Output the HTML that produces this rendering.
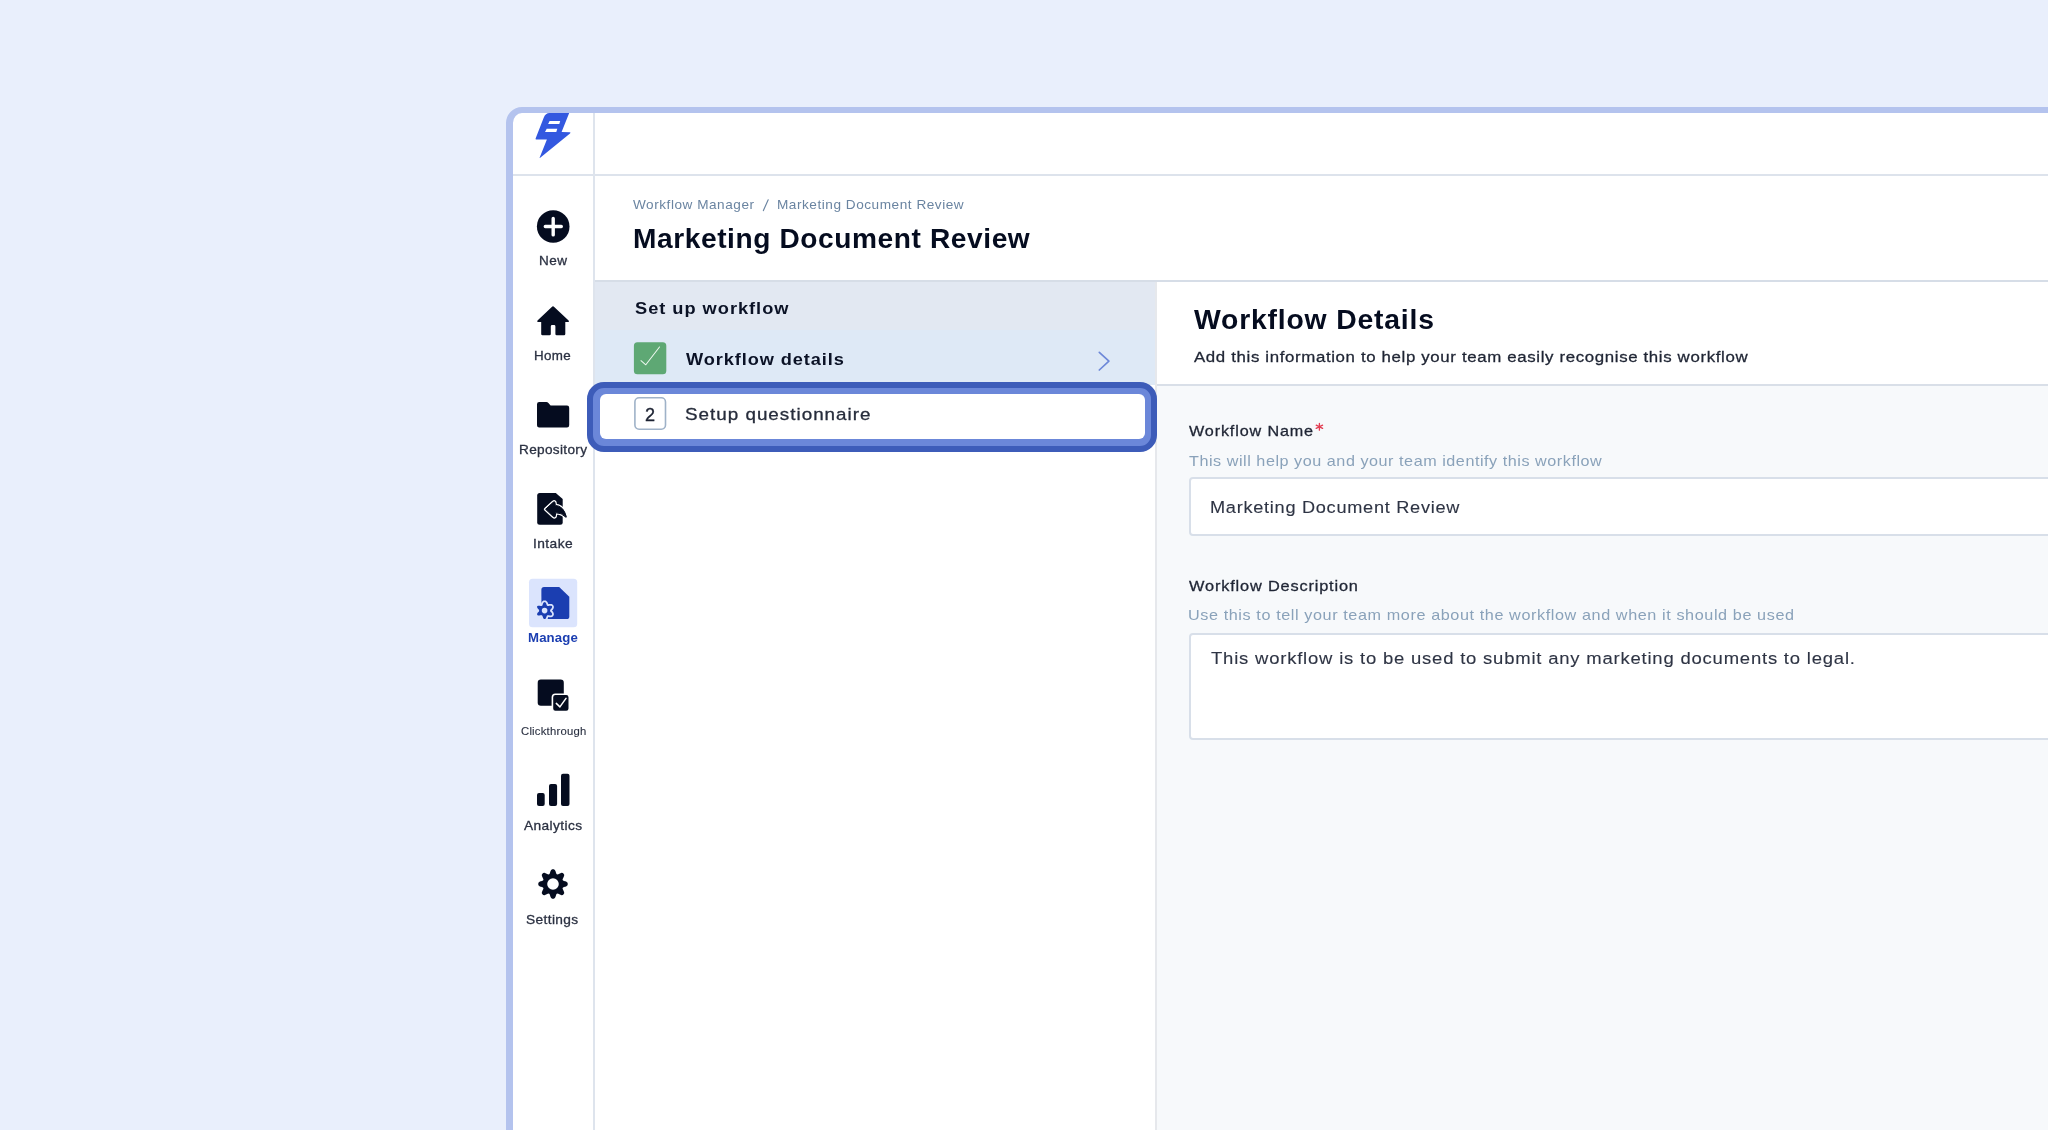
<!DOCTYPE html>
<html><head><meta charset="utf-8">
<style>
html,body{margin:0;padding:0;}
body{width:2048px;height:1130px;overflow:hidden;background:#e9effc;position:relative;font-family:"Liberation Sans",sans-serif;}
.a{position:absolute;}
.t{position:absolute;line-height:1;white-space:nowrap;will-change:transform;}
</style></head><body>
<!-- frame -->
<div class="a" style="left:506px;top:107px;width:1600px;height:1100px;border:6px solid #b4c3ee;border-left-width:7px;border-radius:16px;background:#fff;"></div>
<!-- top bar line -->
<div class="a" style="left:513px;top:174px;width:1535px;height:2px;background:#dde3ec;"></div>
<!-- sidebar divider -->
<div class="a" style="left:593px;top:113px;width:2px;height:1017px;background:#dee4ed;"></div>
<!-- page header line -->
<div class="a" style="left:595px;top:280px;width:1453px;height:2px;background:#d6dde7;"></div>
<!-- left panel bgs -->
<div class="a" style="left:595px;top:282px;width:560px;height:48px;background:#e2e8f2;"></div>
<div class="a" style="left:595px;top:330px;width:560px;height:55px;background:#dee9f6;"></div>
<!-- left panel right border -->
<div class="a" style="left:1155px;top:282px;width:2px;height:848px;background:#e6e8ec;"></div>
<!-- right header line -->
<div class="a" style="left:1157px;top:384px;width:891px;height:2px;background:#d9dfe8;"></div>
<!-- right body bg -->
<div class="a" style="left:1157px;top:386px;width:891px;height:744px;background:#f7f9fb;"></div>
<!-- inputs -->
<div class="a" style="left:1188.5px;top:476.5px;width:900px;height:55px;border:2px solid #d8dfe9;border-radius:4px;background:#fff;"></div>
<div class="a" style="left:1188.5px;top:632.5px;width:900px;height:103px;border:2px solid #d8dfe9;border-radius:4px;background:#fff;"></div>
<!-- highlight -->
<div class="a" style="left:587px;top:382px;width:558px;height:58px;border:6px solid #3d5cb9;border-radius:17px;background:#6b87d9;"></div>
<div class="a" style="left:600px;top:394px;width:544.6px;height:45px;border-radius:6px;background:#fff;"></div>
<!-- icons -->
<svg class="a" style="left:0;top:0" width="2048" height="1130" viewBox="0 0 2048 1130">
 <!-- logo -->
 <path d="M549.5,113 L569.2,113 L561.6,132 L570,132.3 Q571,132.6 570,133.6 L540.2,157.8 Q539.4,158.3 539.7,157.4 L546.9,139.4 L536.2,139.4 Q535.3,139.4 535.6,138.5 L543.8,117.5 Q545.5,113 549.5,113 Z" fill="#3358e0"/>
 <path d="M549.6,120.9 L560.2,120.9 L559.3,124.1 L548.1,124.1 Z M546.7,128.7 L557.3,128.7 L556.3,131.9 L545,131.9 Z" fill="#fff"/>
 <!-- new -->
 <circle cx="553.2" cy="226.5" r="16.3" fill="#050c1f"/>
 <path d="M545.3,226.5 H561.3 M553.2,218.4 V234.9" stroke="#fff" stroke-width="3.4" stroke-linecap="round"/>
 <!-- home -->
 <path d="M551.8,306.9 Q553,305.8 554.2,306.9 L568.6,320.6 Q569.6,321.9 568.3,321.9 L565.3,321.9 L565.3,334 Q565.3,335.3 564,335.3 L556.7,335.3 Q555.4,335.3 555.4,334 L555.4,326.4 Q555.4,325.1 554.1,325.1 L552.1,325.1 Q550.8,325.1 550.8,326.4 L550.8,334 Q550.8,335.3 549.5,335.3 L542.5,335.3 Q541.2,335.3 541.2,334 L541.2,321.9 L537.9,321.9 Q536.6,321.9 537.5,320.6 Z" fill="#050c1f"/>
 <!-- folder -->
 <path d="M539.2,402 L546.3,402 Q547.6,402 548.4,402.9 L550.6,405.6 L567,405.6 Q569.2,405.6 569.2,407.8 L569.2,425.3 Q569.2,427.5 567,427.5 L539.2,427.5 Q537,427.5 537,425.3 L537,404.2 Q537,402 539.2,402 Z" fill="#050c1f"/>
 <!-- intake -->
 <path d="M539.7,493 L555.8,493 L562.7,498.9 L562.7,522.3 Q562.7,524.8 560.2,524.8 L539.7,524.8 Q537.2,524.8 537.2,522.3 L537.2,495.5 Q537.2,493 539.7,493 Z" fill="#050c1f"/>
 <path d="M545.6,509.3 L553.2,502.3 Q554.8,501 555,502.8 L555.3,505.4 Q563.5,505.8 566.3,516.6 Q566.5,517.6 565.6,517 Q561.5,512.6 555.6,512.8 L555.3,515.9 Q555,517.8 553.4,516.5 Z" fill="none" stroke="#fff" stroke-width="3.4" stroke-linejoin="round"/>
 <path d="M545.6,509.3 L553.2,502.3 Q554.8,501 555,502.8 L555.3,505.4 Q563.5,505.8 566.3,516.6 Q566.5,517.6 565.6,517 Q561.5,512.6 555.6,512.8 L555.3,515.9 Q555,517.8 553.4,516.5 Z" fill="#050c1f" stroke="#050c1f" stroke-width="1" stroke-linejoin="round"/>
 <!-- manage -->
 <rect x="529" y="578.8" width="48.2" height="48.5" rx="3.5" fill="#dbe4fd"/>
 <path d="M544,587 L559.2,587 L569.3,596.8 L569.3,616.5 Q569.3,619.1 566.7,619.1 L544,619.1 Q541.4,619.1 541.4,616.5 L541.4,589.6 Q541.4,587 544,587 Z" fill="#1b3eb1"/>
 <path fill="#dbe4fd" stroke="#dbe4fd" stroke-width="3.4" stroke-linejoin="round" d="M550.10,610.60 L550.11,610.41 L550.19,610.21 L550.32,610.00 L550.50,609.77 L550.73,609.52 L550.98,609.24 L551.23,608.95 L551.49,608.63 L551.72,608.29 L551.91,607.94 L552.05,607.59 L552.13,607.25 L552.15,606.92 L552.09,606.62 L551.96,606.35 L551.79,606.10 L551.56,605.90 L551.27,605.75 L550.93,605.65 L550.56,605.60 L550.16,605.59 L549.75,605.62 L549.35,605.68 L548.96,605.76 L548.60,605.83 L548.27,605.90 L547.98,605.95 L547.73,605.96 L547.52,605.92 L547.35,605.84 L547.19,605.73 L547.06,605.56 L546.94,605.34 L546.83,605.07 L546.73,604.75 L546.61,604.40 L546.48,604.03 L546.33,603.65 L546.16,603.28 L545.95,602.94 L545.72,602.64 L545.46,602.40 L545.19,602.22 L544.90,602.12 L544.60,602.10 L544.30,602.12 L544.01,602.22 L543.74,602.40 L543.48,602.64 L543.25,602.94 L543.04,603.28 L542.87,603.65 L542.72,604.03 L542.59,604.40 L542.47,604.75 L542.37,605.07 L542.26,605.34 L542.14,605.56 L542.01,605.73 L541.85,605.84 L541.68,605.92 L541.47,605.96 L541.22,605.95 L540.93,605.90 L540.60,605.83 L540.24,605.76 L539.85,605.68 L539.45,605.62 L539.04,605.59 L538.64,605.60 L538.27,605.65 L537.93,605.75 L537.64,605.90 L537.41,606.10 L537.24,606.35 L537.11,606.62 L537.05,606.92 L537.07,607.25 L537.15,607.59 L537.29,607.94 L537.48,608.29 L537.71,608.63 L537.97,608.95 L538.22,609.24 L538.47,609.52 L538.70,609.77 L538.88,610.00 L539.01,610.21 L539.09,610.41 L539.10,610.60 L539.09,610.79 L539.01,610.99 L538.88,611.20 L538.70,611.43 L538.47,611.68 L538.22,611.96 L537.97,612.25 L537.71,612.57 L537.48,612.91 L537.29,613.26 L537.15,613.61 L537.07,613.95 L537.05,614.28 L537.11,614.58 L537.24,614.85 L537.41,615.10 L537.64,615.30 L537.93,615.45 L538.27,615.55 L538.64,615.60 L539.04,615.61 L539.45,615.58 L539.85,615.52 L540.24,615.44 L540.60,615.37 L540.93,615.30 L541.22,615.25 L541.47,615.24 L541.68,615.28 L541.85,615.36 L542.01,615.47 L542.14,615.64 L542.26,615.86 L542.37,616.13 L542.47,616.45 L542.59,616.80 L542.72,617.17 L542.87,617.55 L543.04,617.92 L543.25,618.26 L543.48,618.56 L543.74,618.80 L544.01,618.98 L544.30,619.08 L544.60,619.10 L544.90,619.08 L545.19,618.98 L545.46,618.80 L545.72,618.56 L545.95,618.26 L546.16,617.92 L546.33,617.55 L546.48,617.17 L546.61,616.80 L546.73,616.45 L546.83,616.13 L546.94,615.86 L547.06,615.64 L547.19,615.47 L547.35,615.36 L547.52,615.28 L547.73,615.24 L547.98,615.25 L548.27,615.30 L548.60,615.37 L548.96,615.44 L549.35,615.52 L549.75,615.58 L550.16,615.61 L550.56,615.60 L550.93,615.55 L551.27,615.45 L551.56,615.30 L551.79,615.10 L551.96,614.85 L552.09,614.58 L552.15,614.28 L552.13,613.95 L552.05,613.61 L551.91,613.26 L551.72,612.91 L551.49,612.57 L551.23,612.25 L550.98,611.96 L550.73,611.68 L550.50,611.43 L550.32,611.20 L550.19,610.99 L550.11,610.79Z"/><path fill-rule="evenodd" fill="#1b3eb1" stroke="#dbe4fd" stroke-width="0" d="M550.10,610.60 L550.10,610.41 L550.10,610.22 L550.16,610.02 L550.30,609.80 L550.50,609.56 L550.74,609.29 L551.02,609.00 L551.29,608.68 L551.56,608.34 L551.79,607.98 L551.98,607.62 L552.09,607.26 L552.13,606.93 L552.09,606.62 L551.96,606.35 L551.79,606.11 L551.55,605.91 L551.23,605.78 L550.87,605.70 L550.46,605.68 L550.04,605.70 L549.61,605.76 L549.19,605.84 L548.80,605.93 L548.45,606.01 L548.14,606.06 L547.89,606.07 L547.68,606.03 L547.51,605.94 L547.35,605.84 L547.18,605.74 L547.02,605.65 L546.88,605.49 L546.76,605.26 L546.65,604.97 L546.54,604.63 L546.42,604.24 L546.28,603.84 L546.12,603.44 L545.93,603.06 L545.71,602.72 L545.46,602.44 L545.18,602.24 L544.90,602.13 L544.60,602.10 L544.30,602.13 L544.02,602.24 L543.74,602.44 L543.49,602.72 L543.27,603.06 L543.08,603.44 L542.92,603.84 L542.78,604.24 L542.66,604.63 L542.55,604.97 L542.44,605.26 L542.32,605.49 L542.18,605.65 L542.02,605.74 L541.85,605.84 L541.69,605.94 L541.52,606.03 L541.31,606.07 L541.06,606.06 L540.75,606.01 L540.40,605.93 L540.01,605.84 L539.59,605.76 L539.16,605.70 L538.74,605.68 L538.33,605.70 L537.97,605.78 L537.65,605.91 L537.41,606.11 L537.24,606.35 L537.11,606.62 L537.07,606.93 L537.11,607.26 L537.22,607.62 L537.41,607.98 L537.64,608.34 L537.91,608.68 L538.18,609.00 L538.46,609.29 L538.70,609.56 L538.90,609.80 L539.04,610.02 L539.10,610.22 L539.10,610.41 L539.10,610.60 L539.10,610.79 L539.10,610.98 L539.04,611.18 L538.90,611.40 L538.70,611.64 L538.46,611.91 L538.18,612.20 L537.91,612.52 L537.64,612.86 L537.41,613.22 L537.22,613.58 L537.11,613.94 L537.07,614.27 L537.11,614.58 L537.24,614.85 L537.41,615.09 L537.65,615.29 L537.97,615.42 L538.33,615.50 L538.74,615.52 L539.16,615.50 L539.59,615.44 L540.01,615.36 L540.40,615.27 L540.75,615.19 L541.06,615.14 L541.31,615.13 L541.52,615.17 L541.69,615.26 L541.85,615.36 L542.02,615.46 L542.18,615.55 L542.32,615.71 L542.44,615.94 L542.55,616.23 L542.66,616.57 L542.78,616.96 L542.92,617.36 L543.08,617.76 L543.27,618.14 L543.49,618.48 L543.74,618.76 L544.02,618.96 L544.30,619.07 L544.60,619.10 L544.90,619.07 L545.18,618.96 L545.46,618.76 L545.71,618.48 L545.93,618.14 L546.12,617.76 L546.28,617.36 L546.42,616.96 L546.54,616.57 L546.65,616.23 L546.76,615.94 L546.88,615.71 L547.02,615.55 L547.18,615.46 L547.35,615.36 L547.51,615.26 L547.68,615.17 L547.89,615.13 L548.14,615.14 L548.45,615.19 L548.80,615.27 L549.19,615.36 L549.61,615.44 L550.04,615.50 L550.46,615.52 L550.87,615.50 L551.23,615.42 L551.55,615.29 L551.79,615.09 L551.96,614.85 L552.09,614.58 L552.13,614.27 L552.09,613.94 L551.98,613.58 L551.79,613.22 L551.56,612.86 L551.29,612.52 L551.02,612.20 L550.74,611.91 L550.50,611.64 L550.30,611.40 L550.16,611.18 L550.10,610.98 L550.10,610.79Z M547.40,610.60 A2.8,2.8 0 1,0 541.80,610.60 A2.8,2.8 0 1,0 547.40,610.60Z"/>
 <!-- clickthrough -->
 <rect x="537.7" y="679.6" width="26.1" height="26.2" rx="3.2" fill="#050c1f"/>
 <rect x="552.4" y="694.3" width="16.9" height="17.2" rx="3" fill="#050c1f" stroke="#fff" stroke-width="1.6"/>
 <path d="M556.3,703.4 L559.9,706.9 L566,698.4" stroke="#fff" stroke-width="1.5" fill="none" stroke-linecap="round" stroke-linejoin="round"/>
 <!-- analytics -->
 <rect x="537" y="792.9" width="7.7" height="13.1" rx="2" fill="#050c1f"/>
 <rect x="549" y="784" width="8.1" height="22" rx="2" fill="#050c1f"/>
 <rect x="561" y="773.8" width="8.5" height="32.2" rx="2" fill="#050c1f"/>
 <!-- settings -->
 <path fill-rule="evenodd" fill="#050c1f" d="M567.70,884.00 L567.69,883.62 L567.68,883.23 L567.56,882.85 L567.31,882.50 L566.95,882.16 L566.48,881.86 L565.95,881.60 L565.38,881.37 L564.80,881.17 L564.25,880.99 L563.75,880.82 L563.33,880.64 L563.02,880.45 L562.81,880.23 L562.70,879.98 L562.60,879.73 L562.59,879.43 L562.68,879.07 L562.85,878.65 L563.08,878.18 L563.34,877.66 L563.61,877.11 L563.85,876.54 L564.04,875.98 L564.16,875.44 L564.18,874.94 L564.11,874.51 L563.92,874.17 L563.66,873.88 L563.39,873.61 L563.12,873.34 L562.83,873.08 L562.49,872.89 L562.06,872.82 L561.56,872.84 L561.02,872.96 L560.46,873.15 L559.89,873.39 L559.34,873.66 L558.82,873.92 L558.35,874.15 L557.93,874.32 L557.57,874.41 L557.27,874.40 L557.02,874.30 L556.77,874.19 L556.55,873.98 L556.36,873.67 L556.18,873.25 L556.01,872.75 L555.83,872.20 L555.63,871.62 L555.40,871.05 L555.14,870.52 L554.84,870.05 L554.50,869.69 L554.15,869.44 L553.77,869.32 L553.38,869.31 L553.00,869.30 L552.62,869.31 L552.23,869.32 L551.85,869.44 L551.50,869.69 L551.16,870.05 L550.86,870.52 L550.60,871.05 L550.37,871.62 L550.17,872.20 L549.99,872.75 L549.82,873.25 L549.64,873.67 L549.45,873.98 L549.23,874.19 L548.98,874.30 L548.73,874.40 L548.43,874.41 L548.07,874.32 L547.65,874.15 L547.18,873.92 L546.66,873.66 L546.11,873.39 L545.54,873.15 L544.98,872.96 L544.44,872.84 L543.94,872.82 L543.51,872.89 L543.17,873.08 L542.88,873.34 L542.61,873.61 L542.34,873.88 L542.08,874.17 L541.89,874.51 L541.82,874.94 L541.84,875.44 L541.96,875.98 L542.15,876.54 L542.39,877.11 L542.66,877.66 L542.92,878.18 L543.15,878.65 L543.32,879.07 L543.41,879.43 L543.40,879.73 L543.30,879.98 L543.19,880.23 L542.98,880.45 L542.67,880.64 L542.25,880.82 L541.75,880.99 L541.20,881.17 L540.62,881.37 L540.05,881.60 L539.52,881.86 L539.05,882.16 L538.69,882.50 L538.44,882.85 L538.32,883.23 L538.31,883.62 L538.30,884.00 L538.31,884.38 L538.32,884.77 L538.44,885.15 L538.69,885.50 L539.05,885.84 L539.52,886.14 L540.05,886.40 L540.62,886.63 L541.20,886.83 L541.75,887.01 L542.25,887.18 L542.67,887.36 L542.98,887.55 L543.19,887.77 L543.30,888.02 L543.40,888.27 L543.41,888.57 L543.32,888.93 L543.15,889.35 L542.92,889.82 L542.66,890.34 L542.39,890.89 L542.15,891.46 L541.96,892.02 L541.84,892.56 L541.82,893.06 L541.89,893.49 L542.08,893.83 L542.34,894.12 L542.61,894.39 L542.88,894.66 L543.17,894.92 L543.51,895.11 L543.94,895.18 L544.44,895.16 L544.98,895.04 L545.54,894.85 L546.11,894.61 L546.66,894.34 L547.18,894.08 L547.65,893.85 L548.07,893.68 L548.43,893.59 L548.73,893.60 L548.98,893.70 L549.23,893.81 L549.45,894.02 L549.64,894.33 L549.82,894.75 L549.99,895.25 L550.17,895.80 L550.37,896.38 L550.60,896.95 L550.86,897.48 L551.16,897.95 L551.50,898.31 L551.85,898.56 L552.23,898.68 L552.62,898.69 L553.00,898.70 L553.38,898.69 L553.77,898.68 L554.15,898.56 L554.50,898.31 L554.84,897.95 L555.14,897.48 L555.40,896.95 L555.63,896.38 L555.83,895.80 L556.01,895.25 L556.18,894.75 L556.36,894.33 L556.55,894.02 L556.77,893.81 L557.02,893.70 L557.27,893.60 L557.57,893.59 L557.93,893.68 L558.35,893.85 L558.82,894.08 L559.34,894.34 L559.89,894.61 L560.46,894.85 L561.02,895.04 L561.56,895.16 L562.06,895.18 L562.49,895.11 L562.83,894.92 L563.12,894.66 L563.39,894.39 L563.66,894.12 L563.92,893.83 L564.11,893.49 L564.18,893.06 L564.16,892.56 L564.04,892.02 L563.85,891.46 L563.61,890.89 L563.34,890.34 L563.08,889.82 L562.85,889.35 L562.68,888.93 L562.59,888.57 L562.60,888.27 L562.70,888.02 L562.81,887.77 L563.02,887.55 L563.33,887.36 L563.75,887.18 L564.25,887.01 L564.80,886.83 L565.38,886.63 L565.95,886.40 L566.48,886.14 L566.95,885.84 L567.31,885.50 L567.56,885.15 L567.68,884.77 L567.69,884.38Z M558.80,884.00 A5.8,5.8 0 1,0 547.20,884.00 A5.8,5.8 0 1,0 558.80,884.00Z"/>
 <!-- green check -->
 <rect x="633.9" y="342.2" width="32.4" height="32.1" rx="3.5" fill="#5ea874"/>
 <path d="M641,360.7 L645.8,364.8 L659.5,347" stroke="#eef8f0" stroke-width="1.05" fill="none" stroke-linecap="round" stroke-linejoin="round"/>
 <!-- chevron -->
 <path d="M1099.3,352.3 L1108.9,361.1 L1099.3,370" stroke="#6d88d8" stroke-width="1.7" fill="none" stroke-linecap="round" stroke-linejoin="round"/>
 <!-- number box -->
 <rect x="634.9" y="397.8" width="30.6" height="31.4" rx="4.2" fill="#fff" stroke="#9fb2c8" stroke-width="1.6"/>
 <!-- slash -->
 <path d="M768.2,199.8 L763.4,210.6" stroke="#6a84a1" stroke-width="1.15" stroke-linecap="round"/>
 <!-- asterisk -->
 <path d="M1319.4,423.4 V430.2 M1316.2,425.2 L1322.6,428.4 M1322.6,425.2 L1316.2,428.4" stroke="#e23d52" stroke-width="1.3" stroke-linecap="round"/>
</svg>
<div class="t" style="left:538.9px;top:254.4px;font-size:13.0px;letter-spacing:0.49px;transform:scaleX(1.0392);transform-origin:0 0;font-weight:400;color:#2b3142;-webkit-text-stroke:0.3px #2b3142">New</div>
<div class="t" style="left:534.3px;top:349.4px;font-size:13.0px;letter-spacing:0.329px;transform:scaleX(1.029);transform-origin:0 0;font-weight:400;color:#2b3142;-webkit-text-stroke:0.3px #2b3142">Home</div>
<div class="t" style="left:519.4px;top:443.3px;font-size:13.0px;letter-spacing:0.315px;transform:scaleX(1.0465);transform-origin:0 0;font-weight:400;color:#2b3142;-webkit-text-stroke:0.3px #2b3142">Repository</div>
<div class="t" style="left:533.2px;top:536.7px;font-size:13.0px;letter-spacing:0.398px;transform:scaleX(1.0586);transform-origin:0 0;font-weight:400;color:#2b3142;-webkit-text-stroke:0.3px #2b3142">Intake</div>
<div class="t" style="left:527.9px;top:630.5px;font-size:13.0px;letter-spacing:0.139px;transform:scaleX(1.0148);transform-origin:0 0;font-weight:700;color:#1b3eb1">Manage</div>
<div class="t" style="left:520.7px;top:726.2px;font-size:10.9px;letter-spacing:0.21px;transform:scaleX(1.0384);transform-origin:0 0;font-weight:400;color:#2b3142;-webkit-text-stroke:0.12px #2b3142">Clickthrough</div>
<div class="t" style="left:523.9px;top:819.1px;font-size:13.0px;letter-spacing:0.365px;transform:scaleX(1.0561);transform-origin:0 0;font-weight:400;color:#2b3142;-webkit-text-stroke:0.3px #2b3142">Analytics</div>
<div class="t" style="left:526.4px;top:913.1px;font-size:13.0px;letter-spacing:0.361px;transform:scaleX(1.055);transform-origin:0 0;font-weight:400;color:#2b3142;-webkit-text-stroke:0.3px #2b3142">Settings</div>
<div class="t" style="left:633.0px;top:198.8px;font-size:12.7px;letter-spacing:0.499px;transform:scaleX(1.0706);transform-origin:0 0;font-weight:400;color:#6a84a1">Workflow Manager</div>
<div class="t" style="left:777.0px;top:198.8px;font-size:12.7px;letter-spacing:0.49px;transform:scaleX(1.0731);transform-origin:0 0;font-weight:400;color:#6a84a1">Marketing Document Review</div>
<div class="t" style="left:632.7px;top:224.8px;font-size:27.1px;letter-spacing:0.569px;transform:scaleX(1.0371);transform-origin:0 0;font-weight:700;color:#050c1f">Marketing Document Review</div>
<div class="t" style="left:634.5px;top:300.8px;font-size:16.6px;letter-spacing:0.892px;transform:scaleX(1.0983);transform-origin:0 0;font-weight:700;color:#0b1226">Set up workflow</div>
<div class="t" style="left:685.8px;top:351.6px;font-size:16.6px;letter-spacing:0.837px;transform:scaleX(1.0958);transform-origin:0 0;font-weight:700;color:#0b1226">Workflow details</div>
<div class="t" style="left:685.2px;top:405.8px;font-size:17.0px;letter-spacing:0.899px;transform:scaleX(1.1079);transform-origin:0 0;font-weight:400;color:#262c3b;-webkit-text-stroke:0.3px #262c3b">Setup questionnaire</div>
<div class="t" style="left:1194.0px;top:306.6px;font-size:26.9px;letter-spacing:0.769px;transform:scaleX(1.0537);transform-origin:0 0;font-weight:700;color:#050c1f">Workflow Details</div>
<div class="t" style="left:1193.9px;top:349.1px;font-size:15.5px;letter-spacing:0.593px;transform:scaleX(1.0858);transform-origin:0 0;font-weight:400;color:#1f2534;-webkit-text-stroke:0.3px #1f2534">Add this information to help your team easily recognise this workflow</div>
<div class="t" style="left:1189.1px;top:423.6px;font-size:14.8px;letter-spacing:0.793px;transform:scaleX(1.0915);transform-origin:0 0;font-weight:400;color:#1f2534;-webkit-text-stroke:0.3px #1f2534">Workflow Name</div>
<div class="t" style="left:1189.1px;top:453.1px;font-size:15.0px;letter-spacing:0.506px;transform:scaleX(1.0768);transform-origin:0 0;font-weight:400;color:#8aa2ba">This will help you and your team identify this workflow</div>
<div class="t" style="left:1210.1px;top:500.3px;font-size:16.9px;letter-spacing:0.671px;transform:scaleX(1.0749);transform-origin:0 0;font-weight:400;color:#2e3444;-webkit-text-stroke:0.12px #2e3444">Marketing Document Review</div>
<div class="t" style="left:1189.1px;top:579.1px;font-size:14.8px;letter-spacing:0.755px;transform:scaleX(1.104);transform-origin:0 0;font-weight:400;color:#1f2534;-webkit-text-stroke:0.3px #1f2534">Workflow Description</div>
<div class="t" style="left:1188.1px;top:606.5px;font-size:15.0px;letter-spacing:0.547px;transform:scaleX(1.0802);transform-origin:0 0;font-weight:400;color:#8aa2ba">Use this to tell your team more about the workflow and when it should be used</div>
<div class="t" style="left:1210.6px;top:650.6px;font-size:16.9px;letter-spacing:0.722px;transform:scaleX(1.0942);transform-origin:0 0;font-weight:400;color:#2e3444;-webkit-text-stroke:0.12px #2e3444">This workflow is to be used to submit any marketing documents to legal.</div>
<div class="t" style="left:644.5px;top:406.1px;font-size:18.1px;color:#1d2333;-webkit-text-stroke:0.35px #1d2333">2</div>
</body></html>
